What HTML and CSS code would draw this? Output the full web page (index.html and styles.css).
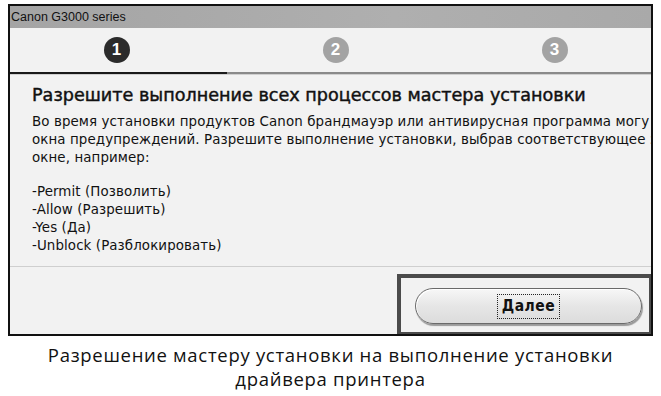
FILE: index.html
```html
<!DOCTYPE html>
<html lang="ru">
<head>
  <meta charset="UTF-8" />
  <title>Canon G3000 series</title>
  <link rel="stylesheet" href="styles.css">
</head>
<body>
  <div class="window">
    <div class="titlebar">Canon G3000 series</div>

    <div class="steps">
      <div class="step"><span class="dot active">1</span></div>
      <div class="step"><span class="dot">2</span></div>
      <div class="step"><span class="dot">3</span></div>
    </div>
    <div class="progress"><div class="done"></div></div>

    <div class="content">
      <h1>Разрешите выполнение всех процессов мастера установки</h1>
      <p>Во время установки продуктов Canon брандмауэр или антивирусная программа могу</p>
      <p>окна предупреждений. Разрешите выполнение установки, выбрав соответствующее з</p>
      <p>окне, например:</p>
      <p class="blank">&nbsp;</p>
      <p>-Permit (Позволить)</p>
      <p>-Allow (Разрешить)</p>
      <p>-Yes (Да)</p>
      <p>-Unblock (Разблокировать)</p>
    </div>

    <div class="footer">
      <div class="highlight">
        <button class="next"><span class="focus">Далее</span></button>
      </div>
    </div>
  </div>

  <p class="caption">Разрешение мастеру установки на выполнение установки<br>драйвера принтера</p>
</body>
</html>
```

FILE: styles.css
```css
* {
  margin: 0;
  padding: 0;
  box-sizing: border-box;
}

body {
  background: #fff;
  margin: 4px 8px 0;
  font-family: 'DejaVu Sans', sans-serif;
  color: #111;
}

.window {
  border: 2px solid #111;
  background: #f2f2f2;
  overflow: hidden;
}

.titlebar {
  height: 22px;
  background: linear-gradient(90deg, #a4a4a4, #afafaf 60%, #a9a9a9);
  font-family: 'Liberation Sans', sans-serif;
  font-size: 12.5px;
  line-height: 22px;
  padding-left: 1px;
  color: #111;
}

.steps {
  display: flex;
  height: 44px;
  align-items: center;
  margin-left: -3px;
}

.step {
  flex: 0 0 219px;
  display: flex;
  justify-content: center;
}

.dot {
  width: 26px;
  height: 26px;
  border-radius: 50%;
  background: #a3a3a3;
  color: #fff;
  font-family: 'Liberation Sans', sans-serif;
  font-weight: bold;
  font-size: 17px;
  line-height: 26px;
  text-align: center;
}

.dot.active {
  background: #2b2b2b;
}

.progress {
  height: 3px;
  background: #8a8a8a;
  border-bottom: 1px solid #d0d0d0;
}

.progress .done {
  width: 217px;
  height: 2px;
  background: #1a1a1a;
}

.content {
  padding: 9px 0 0 22px;
  height: 192px;
  border-bottom: 1px solid #cfcfcf;
  white-space: nowrap;
  overflow: hidden;
}

.content h1 {
  font-size: 17.6px;
  font-weight: normal;
  -webkit-text-stroke: 0.45px #111;
  line-height: 22px;
  margin-bottom: 7px;
  color: #111;
}

.content p {
  font-size: 13.4px;
  line-height: 18px;
  letter-spacing: 0.1px;
}

.content p.blank {
  line-height: 16px;
}

.footer {
  height: 67px;
  display: flex;
  justify-content: flex-end;
  align-items: flex-end;
}

.highlight {
  width: 256px;
  height: 62px;
  border: 4px solid #4b4b4b;
  margin-right: -2px;
  margin-bottom: -2px;
  padding: 10px 9px 0 14px;
}

.next {
  width: 227px;
  height: 36px;
  border: 1px solid #6a6a6a;
  border-radius: 18px;
  background: linear-gradient(#f7f7f7, #e6e6e6 50%, #dcdcdc);
  box-shadow: inset 1px 1px 0 #fff, 1px 2px 1px #9a9a9a;
  display: flex;
  align-items: center;
  justify-content: center;
  font-family: 'DejaVu Sans Condensed', 'DejaVu Sans', sans-serif;
  font-size: 15.5px;
  font-weight: bold;
  letter-spacing: 0.5px;
  color: #111;
}

.focus {
  border: 1.5px dotted #222;
  padding: 2px 4px;
  line-height: 19px;
}

.caption {
  margin-top: 7px;
  text-align: center;
  font-family: 'Open Sans', sans-serif;
  font-size: 18.5px;
  font-weight: 500;
  line-height: 24px;
  letter-spacing: 0.7px;
  color: #111;
}
```
